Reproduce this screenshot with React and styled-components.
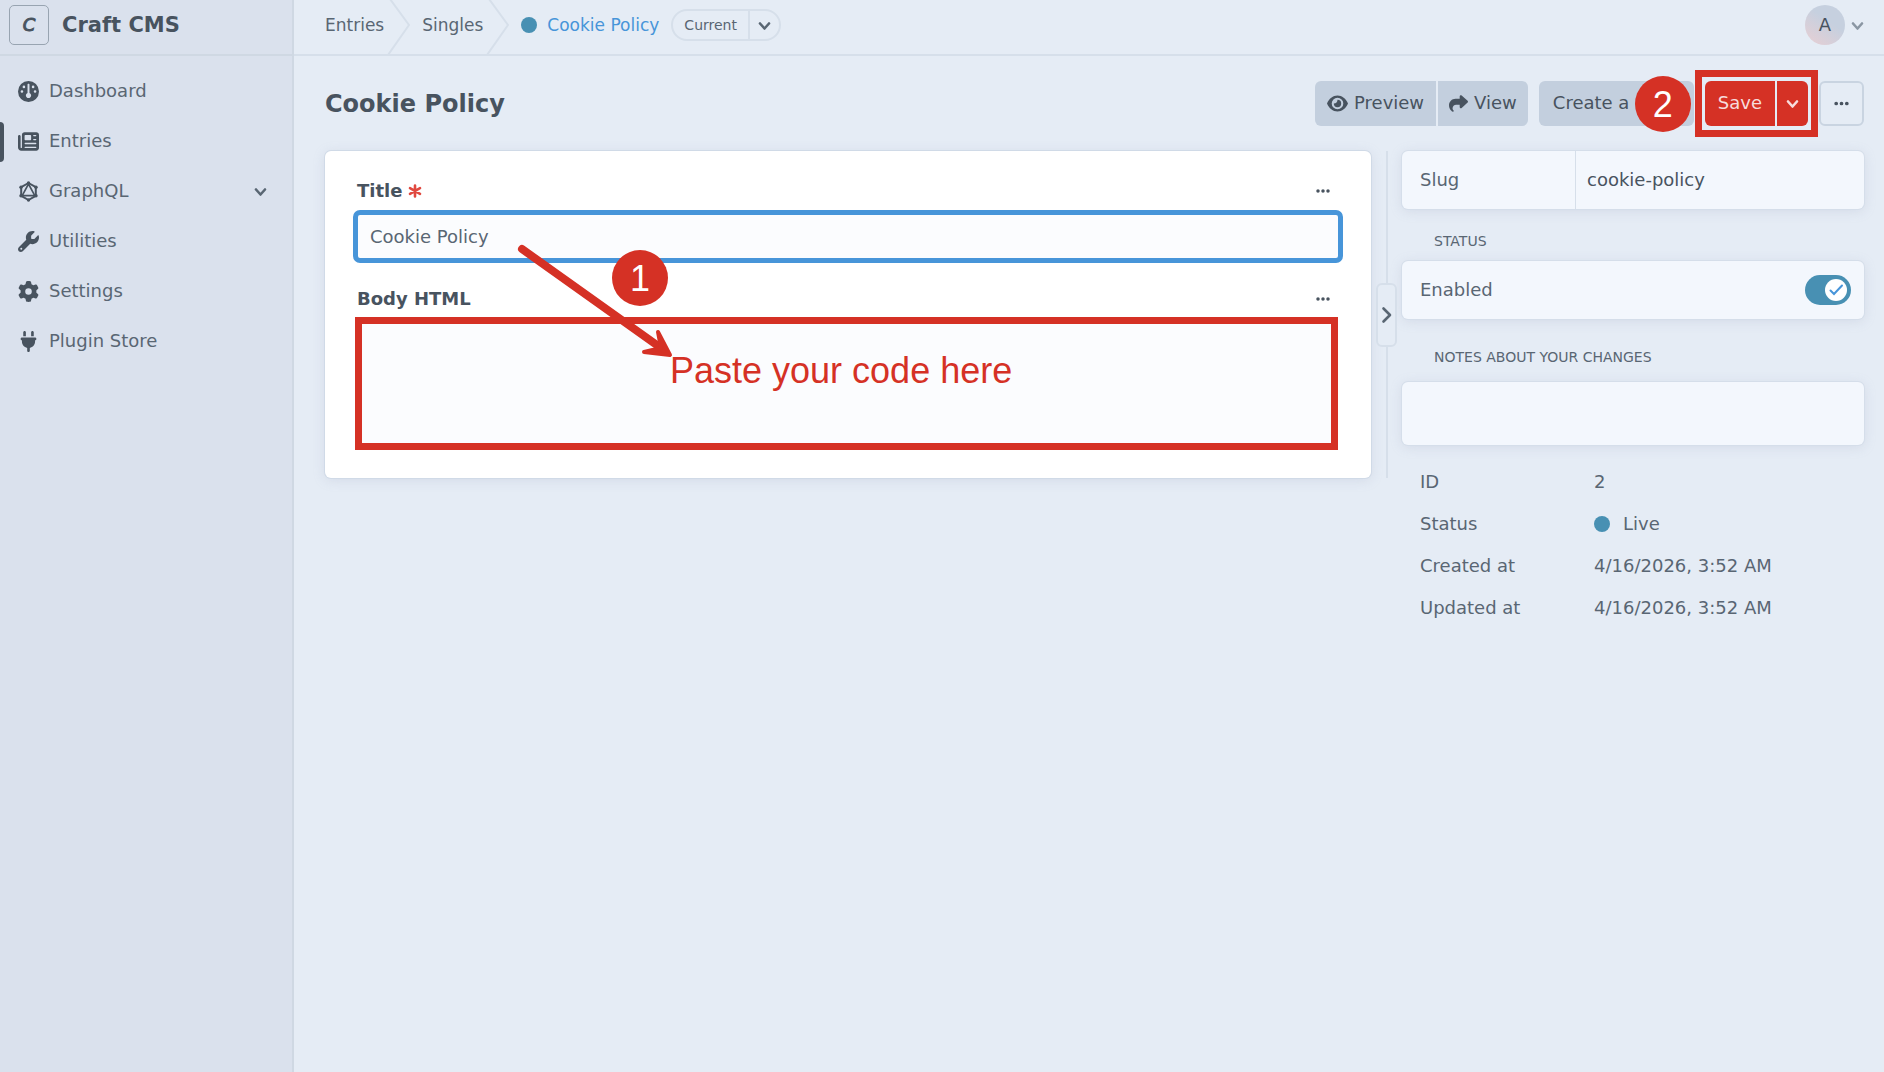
import React, { useState } from "react";
import styled, { createGlobalStyle } from "styled-components";
import {
  FaGauge,
  FaNewspaper,
  FaWrench,
  FaGear,
  FaPlug,
  FaEye,
  FaShare,
  FaEllipsis,
} from "react-icons/fa6";

const c = {
  page: "#e5ecf5",
  sidebar: "#dae1ed",
  line: "#d6dfea",
  sideLine: "#cfd8e3",
  panel: "#f3f7fd",
  text: "#596673",
  dark: "#48535f",
  button: "#c3cfde",
  blue: "#4795d9",
  teal: "#4890b3",
  red: "#d53125",
};

const GlobalStyle = createGlobalStyle`
  *, *::before, *::after { box-sizing: border-box; }
  body {
    margin: 0;
    background: ${c.page};
    color: ${c.text};
    font: 18px/24px "DejaVu Sans", sans-serif;
  }
  button, input, textarea { font: inherit; color: inherit; margin: 0; }
  button { cursor: pointer; }
  a { color: inherit; text-decoration: none; }
`;

const Shell = styled.div`
  display: grid;
  grid-template-columns: 294px minmax(0, 1fr);
  min-height: 100vh;
`;

const Sidebar = styled.aside`
  background: ${c.sidebar};
  border-right: 2px solid ${c.sideLine};
`;

const Brand = styled.a`
  display: flex;
  align-items: center;
  gap: 13px;
  height: 56px;
  padding: 0 9px 4px;
  border-bottom: 2px solid ${c.sideLine};
  color: ${c.dark};
  font-size: 21px;
  font-weight: bold;
`;

const BrandMark = styled.span`
  display: grid;
  place-items: center;
  width: 40px;
  height: 40px;
  border: 1px solid #98a4b1;
  border-radius: 5px;
`;

const NavList = styled.ul`
  list-style: none;
  margin: 0;
  padding: 10px 0;
`;

const NavLink = styled.a`
  position: relative;
  display: flex;
  align-items: center;
  gap: 10px;
  height: 50px;
  padding: 0 25px 0 18px;

  svg { flex: none; color: ${c.dark}; }
  span { flex: 1; }

  &[aria-current]::before {
    content: "";
    position: absolute;
    left: 0;
    top: 6px;
    bottom: 4px;
    width: 4px;
    border-radius: 0 4px 4px 0;
    background: ${c.dark};
  }
`;

const TopBar = styled.header`
  display: flex;
  justify-content: space-between;
  height: 56px;
  padding: 0 20px 0 31px;
  border-bottom: 2px solid ${c.line};
`;

const Crumbs = styled.nav`
  display: flex;
  align-items: center;
  font-size: 17px;
`;

const Crumb = styled.a`
  display: flex;
  align-items: center;
  margin-right: 2px;
  padding-bottom: 4px;
  color: ${(p) => (p.$current ? c.blue : c.text)};
`;

const CrumbArrow = styled.svg`
  flex: none;
  width: 24px;
  height: 54px;
  margin-right: 12px;
`;

const Dot = styled.span`
  flex: none;
  width: 16px;
  height: 16px;
  margin-right: ${(p) => p.$gap};
  border-radius: 50%;
  background: ${c.teal};
`;

const Revision = styled.div`
  display: flex;
  height: 32px;
  margin: 0 0 4px 10px;
  border: 2px solid ${c.line};
  border-radius: 16px;
  font-size: 14px;
`;

const RevisionButton = styled.button`
  display: flex;
  align-items: center;
  padding: ${(p) => (p.$menu ? "0 8px" : "0 11px")};
  border: 0;
  border-left: ${(p) => (p.$menu ? `2px solid ${c.line}` : "0")};
  background: none;
  line-height: 20px;
`;

const Account = styled.button`
  display: flex;
  align-items: center;
  gap: 6px;
  padding: 0 0 4px;
  border: 0;
  background: none;
`;

const Avatar = styled.span`
  display: grid;
  place-items: center;
  width: 40px;
  height: 40px;
  border-radius: 50%;
  background: linear-gradient(35deg, #e3cfd5 10%, #c6d0df 60%);
  color: ${c.dark};
`;

const Content = styled.main`
  padding: 0 20px 32px 31px;
`;

const TitleRow = styled.div`
  display: flex;
  align-items: center;
  justify-content: space-between;
  height: 95px;
`;

const Heading = styled.h1`
  margin: 0;
  color: ${c.dark};
  font-size: 24px;
  line-height: 32px;
`;

const Actions = styled.div`
  display: flex;
  gap: 11px;
`;

const ButtonGroup = styled.div`
  position: relative;
  display: flex;
  gap: 2px;

  > button:not(:last-of-type) { border-top-right-radius: 0; border-bottom-right-radius: 0; }
  > button:not(:first-of-type) { border-top-left-radius: 0; border-bottom-left-radius: 0; }
`;

const Button = styled.button`
  display: flex;
  align-items: center;
  justify-content: center;
  gap: 6px;
  height: 45px;
  padding: 0 ${(p) => p.$pad || "12px"};
  border: ${(p) => (p.$kind === "outline" ? "2px solid #c9d4e1" : "0")};
  border-radius: 6px;
  white-space: nowrap;
  background: ${(p) => ({ primary: c.red, outline: "transparent" })[p.$kind] || c.button};
  color: ${(p) => (p.$kind === "primary" ? "#f7dcdc" : c.dark)};

  span { padding-bottom: 2px; }
`;

const DraftButton = styled(Button)`
  justify-content: flex-start;
  min-width: 155px;
`;

const Columns = styled.div`
  display: flex;
  align-items: flex-start;
`;

const Editor = styled.div`
  flex: 1;
  min-width: 0;
  display: flex;
`;

const FormCard = styled.form`
  flex: 1;
  min-width: 0;
  padding: 28px;
  border-radius: 6px;
  background: #fff;
  box-shadow: 0 0 0 1px #d0dae7, 0 2px 12px rgba(154, 165, 190, 0.25);
`;

const Field = styled.div`
  position: relative;
  & + & { margin-top: 24px; }
`;

const FieldHead = styled.div`
  display: flex;
  align-items: center;
  justify-content: space-between;
  height: 24px;
  margin-bottom: ${(p) => p.$gap};
  padding: 0 12px 0 4px;
  color: ${c.dark};
`;

const FieldLabel = styled.label`
  display: flex;
  align-items: center;
  gap: 6px;
  font-weight: bold;
`;

const PlainButton = styled.button`
  display: flex;
  padding: 0;
  border: 0;
  background: none;
`;

const TextInput = styled.input`
  display: block;
  width: 100%;
  height: 53px;
  padding: 0 12px;
  border: 5px solid ${c.blue};
  border-radius: 7px;
  outline: 0;
  background: #fbfcfe;
`;

const BodyArea = styled.div`
  position: relative;
  margin: 0 5px 0 2px;
`;

const BodyInput = styled.textarea`
  display: block;
  width: 100%;
  height: 133px;
  padding: 12px;
  border: 2px solid ${c.line};
  background: #fbfcfe;
  resize: vertical;
`;

const Divider = styled.div`
  position: relative;
  flex: none;
  width: 31px;

  &::before {
    content: "";
    position: absolute;
    inset: 0 auto 0 15px;
    width: 2px;
    background: ${c.line};
  }
`;

const Handle = styled.button`
  position: absolute;
  top: 132px;
  left: 5px;
  display: grid;
  place-items: center;
  width: 21px;
  height: 64px;
  padding: 0;
  border: 2px solid ${c.line};
  border-radius: 6px;
  background: ${c.page};
`;

const Details = styled.aside`
  flex: none;
  width: 462px;
`;

const Panel = styled.div`
  display: flex;
  align-items: center;
  height: 58px;
  padding: 0 13px 0 18px;
  border-radius: 6px;
  background: ${c.panel};
  box-shadow: 0 0 0 1px #d5deea, 0 2px 12px rgba(154, 165, 190, 0.25);
`;

const SlugLabel = styled.label`
  width: 156px;
  line-height: 58px;
  border-right: 1px solid ${c.line};
`;

const SlugInput = styled.input`
  flex: 1;
  min-width: 0;
  height: 100%;
  padding: 0 12px 2px 11px;
  border: 0;
  outline: 0;
  background: none;
  color: ${c.dark};
`;

const SectionLabel = styled.label`
  display: block;
  padding: ${(p) => p.$pad};
  font-size: 14px;
  line-height: 20px;
  text-transform: uppercase;
`;

const SwitchLabel = styled.label`
  flex: 1;
`;

const Switch = styled.span`
  position: relative;
  display: flex;
`;

const SwitchInput = styled.input`
  appearance: none;
  width: 46px;
  height: 30px;
  border-radius: 15px;
  background: #9aa5b1;
  &:checked { background: ${c.teal}; }
`;

const SwitchThumb = styled.svg`
  position: absolute;
  top: 4px;
  left: ${(p) => (p.$on ? "20px" : "4px")};
  width: 22px;
  height: 22px;
  pointer-events: none;
`;

const Notes = styled.textarea`
  display: block;
  width: 100%;
  height: 63px;
  padding: 12px 18px;
  border: 0;
  border-radius: 6px;
  outline: 0;
  resize: none;
  background: ${c.panel};
  box-shadow: 0 0 0 1px #d5deea, 0 2px 12px rgba(154, 165, 190, 0.25);
`;

const Meta = styled.dl`
  display: grid;
  grid-template-columns: 174px 1fr;
  grid-auto-rows: 42px;
  align-items: center;
  margin: 16px 0 0;
  padding-left: 18px;

  dd { display: flex; align-items: center; margin: 0; }
`;

const Outline = styled.div`
  position: absolute;
  inset: ${(p) => p.$inset || "0"};
  border: 7px solid ${c.red};
  pointer-events: none;
`;

const StepBadge = styled.span`
  position: absolute;
  top: ${(p) => p.$top};
  left: ${(p) => p.$left};
  display: grid;
  place-items: center;
  width: 56px;
  height: 56px;
  padding-top: 2px;
  border-radius: 50%;
  background: ${c.red};
  color: #fff;
  font: 36px/40px "Liberation Sans", sans-serif;
`;

const Callout = styled.span`
  position: absolute;
  top: 34px;
  left: 315px;
  color: ${c.red};
  font: 36px/40px "Liberation Sans", sans-serif;
  white-space: nowrap;
  pointer-events: none;
`;

const Arrow = styled.svg`
  position: absolute;
  top: -76px;
  left: 158px;
  width: 170px;
  height: 124px;
  overflow: visible;
  pointer-events: none;
`;

const ChevronDown = ({ width = 13, color = c.text }) => (
  <svg width={width} height={width} viewBox="0 0 13 13" fill="none" stroke={color} strokeWidth="2.6" strokeLinecap="round" strokeLinejoin="round">
    <path d="M2 4.5 6.5 9.5 11 4.5" />
  </svg>
);

const BrandGlyph = styled.span`
  font-size: 18px;
  font-style: italic;
  font-weight: normal;
  -webkit-text-stroke: 1px currentColor;
`;

const GraphQLIcon = () => (
  <svg width="21" height="21" viewBox="0 0 21 21" fill="none" stroke="currentColor" strokeLinejoin="round">
    <path d="M10.5 2 17.8 6.2v8.6L10.5 19 3.2 14.8V6.2z" strokeWidth="2" />
    <path d="M10.5 3 16.8 14.6H4.2z" strokeWidth="1.6" />
    <g fill="currentColor" stroke="none">
      <circle cx="10.5" cy="2" r="1.7" />
      <circle cx="18" cy="6.2" r="1.7" />
      <circle cx="18" cy="14.8" r="1.7" />
      <circle cx="10.5" cy="19" r="1.7" />
      <circle cx="3" cy="14.8" r="1.7" />
      <circle cx="3" cy="6.2" r="1.7" />
    </g>
  </svg>
);

const EyeIcon = () => (
  <svg width="21" height="19" viewBox="0 0 21 19">
    <path
      fill="currentColor"
      fillRule="evenodd"
      d="M10.5 1.5C15 1.5 19 4.7 21 9.5c-2 4.8-6 8-10.500 8S2 14.300 0 9.500c2-4.800 6-8 10.500-8zm0 2.200a5.800 5.800 0 1 0 0 11.600 5.800 5.800 0 0 0 0-11.600z"
    />
    <path fill="currentColor" d="M10.500 5.800c0 2.200-1.300 3.700-3.700 3.700a3.700 3.700 0 1 0 3.700-3.700z" />
  </svg>
);

const Asterisk = () => (
  <svg width="14" height="14" viewBox="0 0 14 14" stroke="#e0483f" strokeWidth="2.6" strokeLinecap="round">
    <path d="M7 1.500v11M2 4.200l10 5.600M12 4.200 2 9.800" />
  </svg>
);

const Separator = () => (
  <CrumbArrow viewBox="0 0 24 54" fill="none" stroke={c.line} strokeWidth="2">
    <path d="M4 -1 23 25 2 55" />
  </CrumbArrow>
);

const navItems = [
  { label: "Dashboard", Icon: FaGauge },
  { label: "Entries", Icon: FaNewspaper, current: true },
  { label: "GraphQL", Icon: GraphQLIcon, expandable: true },
  { label: "Utilities", Icon: FaWrench },
  { label: "Settings", Icon: FaGear },
  { label: "Plugin Store", Icon: FaPlug },
];

export default function App() {
  const [enabled, setEnabled] = useState(true);

  return (
    <>
      <GlobalStyle />
      <Shell>
        <Sidebar>
          <Brand href="#">
            <BrandMark>
              <BrandGlyph>C</BrandGlyph>
            </BrandMark>
            Craft CMS
          </Brand>
          <nav aria-label="Primary">
            <NavList>
              {navItems.map(({ label, Icon, current, expandable }) => (
                <li key={label}>
                  <NavLink href="#" aria-current={current ? "page" : undefined}>
                    <Icon size={21} />
                    <span>{label}</span>
                    {expandable && <ChevronDown />}
                  </NavLink>
                </li>
              ))}
            </NavList>
          </nav>
        </Sidebar>

        <div>
          <TopBar>
            <Crumbs aria-label="Breadcrumbs">
              <Crumb href="#">Entries</Crumb>
              <Separator />
              <Crumb href="#">Singles</Crumb>
              <Separator />
              <Crumb href="#" $current>
                <Dot $gap="10px" />
                Cookie Policy
              </Crumb>
              <Revision>
                <RevisionButton type="button">Current</RevisionButton>
                <RevisionButton type="button" $menu aria-label="Revisions">
                  <ChevronDown />
                </RevisionButton>
              </Revision>
            </Crumbs>
            <Account type="button" aria-label="My Account">
              <Avatar>A</Avatar>
              <ChevronDown color="#8a96a3" />
            </Account>
          </TopBar>

          <Content>
            <TitleRow>
              <Heading>Cookie Policy</Heading>
              <Actions>
                <ButtonGroup>
                  <Button type="button">
                    <EyeIcon />
                    <span>Preview</span>
                  </Button>
                  <Button type="button" $pad="11px">
                    <FaShare size={19} />
                    <span>View</span>
                  </Button>
                </ButtonGroup>
                <DraftButton type="button" $pad="14px" aria-label="Create a draft">
                  <span>Create a</span>
                </DraftButton>
                <ButtonGroup>
                  <Button type="button" $kind="primary" $pad="13px">
                    <span>Save</span>
                  </Button>
                  <Button type="button" $kind="primary" $pad="9px" aria-label="More save options">
                    <ChevronDown color="#f7dcdc" />
                  </Button>
                  <Outline $inset="-11px -10px" />
                  <StepBadge $top="-5px" $left="-70px">2</StepBadge>
                </ButtonGroup>
                <Button type="button" $kind="outline" aria-label="Actions">
                  <FaEllipsis size={17} />
                </Button>
              </Actions>
            </TitleRow>

            <Columns>
              <Editor>
                <FormCard>
                  <Field>
                    <FieldHead $gap="7px">
                      <FieldLabel htmlFor="title">
                        Title <Asterisk />
                      </FieldLabel>
                      <PlainButton type="button" aria-label="Title actions">
                        <FaEllipsis size={16} />
                      </PlainButton>
                    </FieldHead>
                    <TextInput id="title" defaultValue="Cookie Policy" />
                  </Field>
                  <Field>
                    <FieldHead $gap="6px">
                      <FieldLabel htmlFor="body">Body HTML</FieldLabel>
                      <PlainButton type="button" aria-label="Body HTML actions">
                        <FaEllipsis size={16} />
                      </PlainButton>
                    </FieldHead>
                    <BodyArea>
                      <BodyInput id="body" />
                      <Outline />
                      <Arrow viewBox="0 0 170 124" fill="none" stroke={c.red} strokeLinecap="round" strokeLinejoin="round">
                        <path d="M9 8 148 107" strokeWidth="8" />
                        <path d="M145 91 157 114 131 111 148 107z" fill={c.red} strokeWidth="4" />
                      </Arrow>
                      <StepBadge $top="-67px" $left="257px">1</StepBadge>
                      <Callout>Paste your code here</Callout>
                    </BodyArea>
                  </Field>
                </FormCard>
                <Divider>
                  <Handle type="button" aria-label="Hide sidebar">
                    <svg width="12" height="18" viewBox="0 0 12 18" fill="none" stroke={c.text} strokeWidth="2.6" strokeLinecap="round" strokeLinejoin="round">
                      <path d="M2.5 2.5 9 9 2.5 15.5" />
                    </svg>
                  </Handle>
                </Divider>
              </Editor>

              <Details>
                <Panel>
                  <SlugLabel htmlFor="slug">Slug</SlugLabel>
                  <SlugInput id="slug" defaultValue="cookie-policy" />
                </Panel>
                <SectionLabel as="div" $pad="22px 32px 10px">Status</SectionLabel>
                <Panel>
                  <SwitchLabel htmlFor="enabled">Enabled</SwitchLabel>
                  <Switch>
                    <SwitchInput
                      id="enabled"
                      type="checkbox"
                      role="switch"
                      checked={enabled}
                      onChange={(e) => setEnabled(e.target.checked)}
                    />
                    <SwitchThumb $on={enabled} viewBox="0 0 22 22">
                      <circle cx="11" cy="11" r="11" fill="#fff" />
                      {enabled && (
                        <path d="M5.5 11.5 9 15l8-8.5" fill="none" stroke={c.blue} strokeWidth="2" strokeLinecap="round" />
                      )}
                    </SwitchThumb>
                  </Switch>
                </Panel>
                <SectionLabel htmlFor="notes" $pad="28px 32px 15px">Notes about your changes</SectionLabel>
                <Notes id="notes" />
                <Meta>
                  <dt>ID</dt>
                  <dd>2</dd>
                  <dt>Status</dt>
                  <dd>
                    <Dot $gap="13px" />
                    Live
                  </dd>
                  <dt>Created at</dt>
                  <dd>4/16/2026, 3:52 AM</dd>
                  <dt>Updated at</dt>
                  <dd>4/16/2026, 3:52 AM</dd>
                </Meta>
              </Details>
            </Columns>
          </Content>
        </div>
      </Shell>
    </>
  );
}
